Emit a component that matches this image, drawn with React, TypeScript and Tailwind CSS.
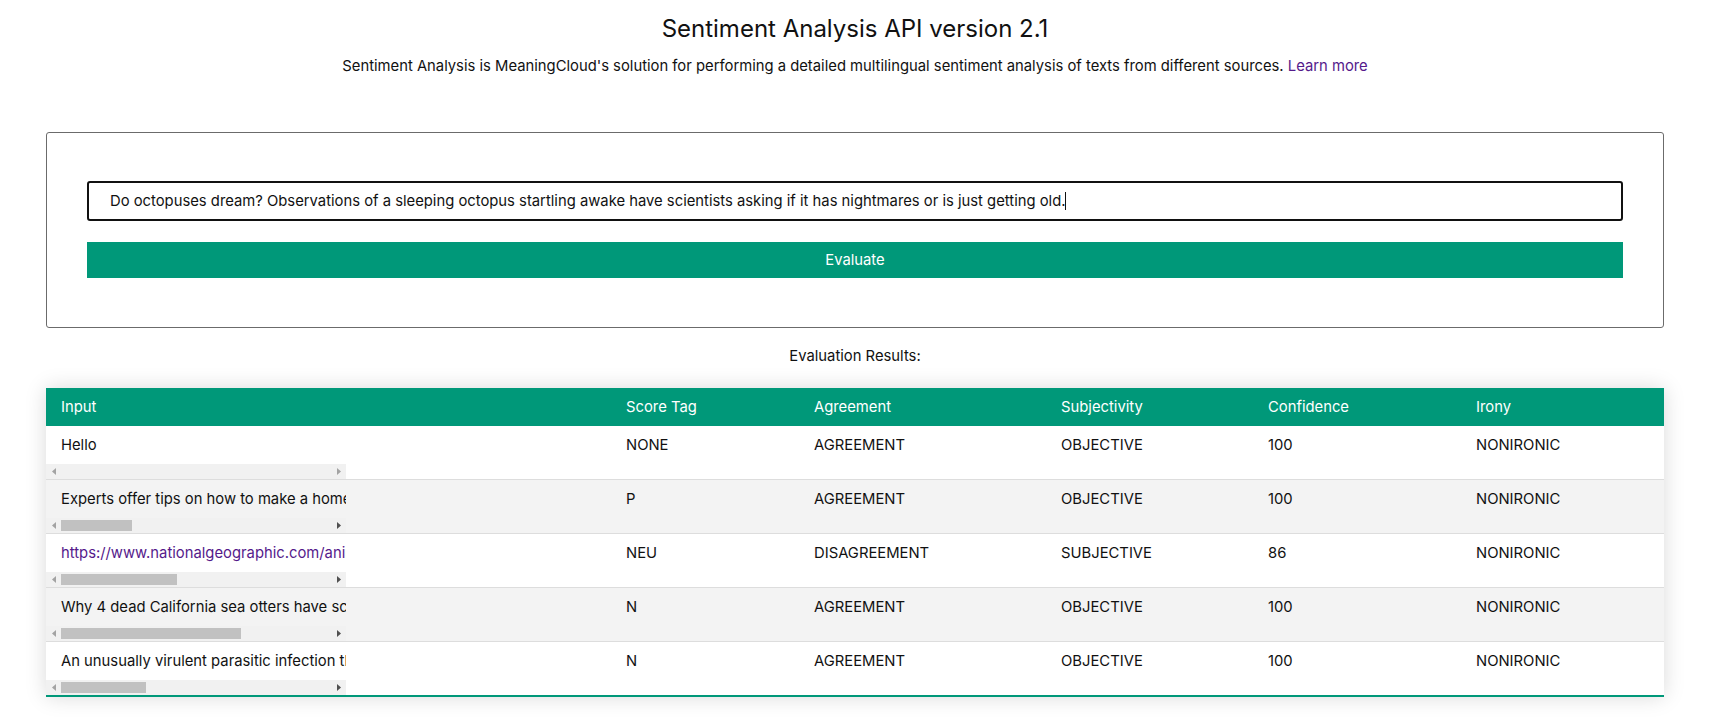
import React from "react";

type Row = {
  input: string;
  link?: boolean;
  thumb: number;
  score: string;
  agreement: string;
  subjectivity: string;
  confidence: string;
  irony: string;
};

const rows: Row[] = [
  { input: "Hello", thumb: 0, score: "NONE", agreement: "AGREEMENT", subjectivity: "OBJECTIVE", confidence: "100", irony: "NONIRONIC" },
  { input: "Experts offer tips on how to make a home safer", thumb: 71, score: "P", agreement: "AGREEMENT", subjectivity: "OBJECTIVE", confidence: "100", irony: "NONIRONIC" },
  { input: "https://www.nationalgeographic.com/animals", link: true, thumb: 116, score: "NEU", agreement: "DISAGREEMENT", subjectivity: "SUBJECTIVE", confidence: "86", irony: "NONIRONIC" },
  { input: "Why 4 dead California sea otters have scientists", thumb: 180, score: "N", agreement: "AGREEMENT", subjectivity: "OBJECTIVE", confidence: "100", irony: "NONIRONIC" },
  { input: "An unusually virulent parasitic infection that", thumb: 85, score: "N", agreement: "AGREEMENT", subjectivity: "OBJECTIVE", confidence: "100", irony: "NONIRONIC" },
];

const font = { fontFamily: '"Inter", "Open Sans", sans-serif' };

function FakeScrollbar({ thumb }: { thumb: number }) {
  const enabled = thumb > 0;
  return (
    <div className="h-[15px] w-[300px] bg-[#f1f1f1] flex items-center">
      <div className="w-[15px] h-[15px] flex items-center justify-center">
        <svg width="4" height="7" viewBox="0 0 4 7">
          <path d="M4 0 L0 3.5 L4 7 Z" fill="#a3a3a3" />
        </svg>
      </div>
      <div className="flex-1 h-[15px] flex items-center">
        {enabled && <div className="h-[11px] bg-[#c1c1c1]" style={{ width: thumb }} />}
      </div>
      <div className="w-[15px] h-[15px] flex items-center justify-center">
        <svg width="4" height="7" viewBox="0 0 4 7">
          <path d="M0 0 L4 3.5 L0 7 Z" fill={enabled ? "#505050" : "#a3a3a3"} />
        </svg>
      </div>
    </div>
  );
}

export default function App() {
  return (
    <div className="w-[1710px] bg-white text-[#111] pt-[12px] pb-[30px]" style={font}>
      <h1 className="text-center text-[24px] leading-[34px] font-normal">Sentiment Analysis API version 2.1</h1>
      <p className="mt-[10px] text-center text-[14.8px] leading-[21px]">
        Sentiment Analysis is MeaningCloud's solution for performing a detailed multilingual sentiment analysis of texts from different sources.{" "}
        <a href="#" className="text-[#551a8b]">Learn more</a>
      </p>

      <div className="mx-[46px] mt-[55px] border border-[#6b6b6b] rounded-[3px] px-[40px] pt-[48px] pb-[49px]">
        <div className="h-[40px] border-2 border-[#111] rounded-[3px] flex items-center pl-[21px] text-[14.8px]">
          <span>Do octopuses dream? Observations of a sleeping octopus startling awake have scientists asking if it has nightmares or is just getting old.</span>
          <span className="inline-block w-px h-[18px] bg-[#111]" />
        </div>
        <button className="mt-[21px] w-full h-[36px] bg-[#009879] text-white text-[14.8px] flex items-center justify-center">
          Evaluate
        </button>
      </div>

      <p className="mt-[18px] text-center text-[14.8px] leading-[21px]">Evaluation Results:</p>

      <div className="mx-[46px] mt-[21px] shadow-[0_0_20px_rgba(0,0,0,0.15)] text-[14.8px]">
        <div className="grid grid-cols-[565px_188px_247px_207px_208px_1fr] bg-[#009879] text-white h-[38px] items-center">
          <div className="pl-[15px]">Input</div>
          <div className="pl-[15px]">Score Tag</div>
          <div className="pl-[15px]">Agreement</div>
          <div className="pl-[15px]">Subjectivity</div>
          <div className="pl-[15px]">Confidence</div>
          <div className="pl-[15px]">Irony</div>
        </div>
        {rows.map((r, i) => (
          <div
            key={i}
            className={`grid grid-cols-[565px_188px_247px_207px_208px_1fr] ${i % 2 === 1 ? "bg-[#f3f3f3]" : "bg-white"} ${i === rows.length - 1 ? "border-b-2 border-[#009879]" : "border-b border-[#dddddd]"}`}
          >
            <div>
              <div className="w-[300px] overflow-hidden">
                <div className="h-[38px] flex items-center pl-[15px] whitespace-nowrap">
                  {r.link ? <a href="#" className="text-[#551a8b]">{r.input}</a> : r.input}
                </div>
              </div>
              <FakeScrollbar thumb={r.thumb} />
            </div>
            <div className="pl-[15px] h-[38px] flex items-center">{r.score}</div>
            <div className="pl-[15px] h-[38px] flex items-center">{r.agreement}</div>
            <div className="pl-[15px] h-[38px] flex items-center">{r.subjectivity}</div>
            <div className="pl-[15px] h-[38px] flex items-center">{r.confidence}</div>
            <div className="pl-[15px] h-[38px] flex items-center">{r.irony}</div>
          </div>
        ))}
      </div>
    </div>
  );
}
